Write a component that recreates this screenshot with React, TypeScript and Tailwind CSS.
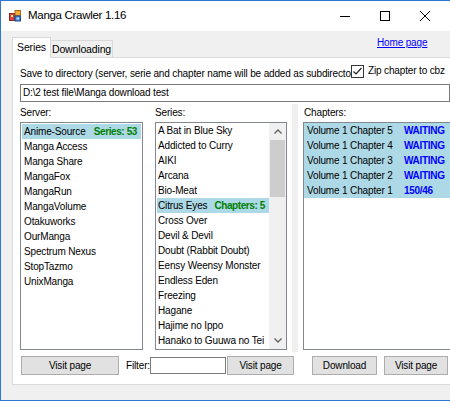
import React from "react";

const servers = [
  "Anime-Source",
  "Manga Access",
  "Manga Share",
  "MangaFox",
  "MangaRun",
  "MangaVolume",
  "Otakuworks",
  "OurManga",
  "Spectrum Nexus",
  "StopTazmo",
  "UnixManga",
];

const series = [
  "A Bat in Blue Sky",
  "Addicted to Curry",
  "AIKI",
  "Arcana",
  "Bio-Meat",
  "Citrus Eyes",
  "Cross Over",
  "Devil & Devil",
  "Doubt (Rabbit Doubt)",
  "Eensy Weensy Monster",
  "Endless Eden",
  "Freezing",
  "Hagane",
  "Hajime no Ippo",
  "Hanako to Guuwa no Tei",
];

const chapters = [
  ["Volume 1 Chapter 5", "WAITING"],
  ["Volume 1 Chapter 4", "WAITING"],
  ["Volume 1 Chapter 3", "WAITING"],
  ["Volume 1 Chapter 2", "WAITING"],
  ["Volume 1 Chapter 1", "150/46"],
];

function AppIcon() {
  return (
    <svg width="12" height="12" viewBox="0 0 12 12" className="shrink-0">
      <rect x="0.5" y="3.5" width="5" height="7" fill="#d9433b" stroke="#8a2a25" />
      <rect x="2" y="5" width="2" height="2" fill="#ffe9a8" />
      <rect x="6" y="0.5" width="5.5" height="5" fill="#f2a93a" stroke="#a86a18" />
      <rect x="6" y="6" width="5.5" height="5" fill="#3d7fd4" stroke="#1f4f94" />
      <rect x="7.5" y="7.5" width="2.5" height="2" fill="#bfe0ff" />
    </svg>
  );
}

function Btn({ label, w }: { label: string; w: string }) {
  return (
    <div
      className={`${w} h-[19px] shrink-0 bg-[#e1e1e1] border border-[#adadad] flex items-center justify-center text-[10px] leading-none`}
    >
      {label}
    </div>
  );
}

export default function App() {
  return (
    <div className="w-[450px] h-[401px] overflow-hidden bg-white font-['Liberation_Sans',Arial,sans-serif] text-[10px] tracking-[-0.15px] text-black">
      <div className="w-[461px] h-[401px] flex flex-col border-t border-l border-b border-[#2a78d2]">
        {/* Title bar */}
        <div className="h-[30px] shrink-0 bg-white flex items-center">
          <div className="ml-[8px] mt-[-1px]">
            <AppIcon />
          </div>
          <span className="ml-[7px] text-[11.5px] tracking-[-0.3px] leading-none mt-[-1px]">
            Manga Crawler 1.16
          </span>
          <div className="ml-auto mr-[16px] flex h-full">
            <div className="w-[40px] h-full flex items-center justify-center">
              <svg width="10" height="10" viewBox="0 0 10 10">
                <line x1="0" y1="5.5" x2="10" y2="5.5" stroke="#000" strokeWidth="1" />
              </svg>
            </div>
            <div className="w-[40px] h-full flex items-center justify-center">
              <svg width="10" height="10" viewBox="0 0 10 10">
                <rect x="0.5" y="0.5" width="9" height="9" fill="none" stroke="#000" strokeWidth="1" />
              </svg>
            </div>
            <div className="w-[40px] h-full flex items-center justify-center">
              <svg width="10" height="10" viewBox="0 0 10 10">
                <line x1="0" y1="0" x2="10" y2="10" stroke="#000" strokeWidth="1" />
                <line x1="10" y1="0" x2="0" y2="10" stroke="#000" strokeWidth="1" />
              </svg>
            </div>
          </div>
        </div>

        {/* Body */}
        <div className="flex-1 bg-[#f0f0f0] flex flex-col pl-[11px] pt-[6px]">
          {/* Tab strip */}
          <div className="h-[20px] flex items-end shrink-0">
            <div className="relative z-10 h-[21px] mb-[-1px] w-[39px] bg-white border border-b-0 border-[#d9d9d9] flex items-center justify-center text-[10.5px] leading-none pb-[2px]">
              Series
            </div>
            <div className="h-[17px] w-[62px] bg-[#f0f0f0] border border-l-0 border-b-0 border-[#d9d9d9] flex items-center justify-center text-[10.5px] leading-none">
              Downloading
            </div>
            <div className="ml-[264px] self-start mt-[0px] text-[10px] leading-[12px] text-[#0000ff] underline">
              Home page
            </div>
          </div>

          {/* Tab panel */}
          <div className="h-[328px] mr-[6px] bg-white border border-[#d9d9d9] flex flex-col pl-[7px] pr-[4px]">
            {/* label + checkbox */}
            <div className="mt-[6px] h-[16px] flex items-start">
              <div className="w-[331px] overflow-hidden whitespace-nowrap mt-[4px] leading-[12px]">
                Save to directory (server, serie and chapter name will be added as subdirectories):
              </div>
              <div className="flex items-start bg-white">
                <svg width="13" height="13" viewBox="0 0 13 13" className="mt-[1px] shrink-0">
                  <rect x="0.5" y="0.5" width="12" height="12" fill="#fff" stroke="#333" />
                  <path d="M2.5 6.5 L5 9 L10.5 3" fill="none" stroke="#222" strokeWidth="1.2" />
                </svg>
                <span className="ml-[4px] mt-[1px] leading-[12px] text-[10px] whitespace-nowrap">
                  Zip chapter to cbz
                </span>
              </div>
            </div>

            {/* directory input */}
            <div className="mt-[4px] h-[18px] border border-[#7a7a7a] flex items-center pl-[2px] leading-none shrink-0">
              D:\2 test file\Manga download test
            </div>

            {/* main split area */}
            <div className="mt-[2px] h-[248px] flex shrink-0">
              {/* Server column */}
              <div className="w-[123px] flex flex-col shrink-0">
                <div className="h-[18px] leading-[18px]">Server:</div>
                <div className="h-[228px] border border-[#828790] bg-white p-[1px] overflow-hidden">
                  {servers.map((s, i) => (
                    <div
                      key={s}
                      className={`h-[15px] flex items-center pl-[2px] pr-[4px] whitespace-nowrap ${
                        i === 0 ? "bg-[#add8e6]" : ""
                      }`}
                    >
                      <span>{s}</span>
                      {i === 0 && (
                        <span className="ml-auto font-bold text-[#008000] tracking-[-0.4px]">
                          Series: 53
                        </span>
                      )}
                    </div>
                  ))}
                </div>
              </div>

              {/* Series column */}
              <div className="ml-[12px] w-[132px] flex flex-col shrink-0">
                <div className="h-[18px] leading-[18px]">Series:</div>
                <div className="h-[228px] border border-[#828790] bg-white flex overflow-hidden">
                  <div className="flex-1 min-w-0 pt-[0px] pl-[1px] overflow-hidden">
                    {series.map((s, i) => (
                      <div
                        key={s}
                        className={`h-[15px] flex items-center pl-[1px] pr-[4px] whitespace-nowrap overflow-hidden ${
                          i === 5 ? "bg-[#add8e6]" : ""
                        }`}
                      >
                        <span>{s}</span>
                        {i === 5 && (
                          <span className="ml-auto font-bold text-[#008000] tracking-[-0.4px]">
                            Chapters: 5
                          </span>
                        )}
                      </div>
                    ))}
                  </div>
                  <div className="w-[17px] shrink-0 bg-[#f0f0f0] flex flex-col items-center">
                    <div className="h-[17px] flex items-center justify-center">
                      <svg width="8" height="5" viewBox="0 0 8 5">
                        <path d="M0.5 4.5 L4 1 L7.5 4.5" fill="none" stroke="#606060" strokeWidth="1.3" />
                      </svg>
                    </div>
                    <div className="w-[15px] h-[57px] bg-[#cdcdcd]" />
                    <div className="flex-1" />
                    <div className="h-[17px] flex items-center justify-center">
                      <svg width="8" height="5" viewBox="0 0 8 5">
                        <path d="M0.5 0.5 L4 4 L7.5 0.5" fill="none" stroke="#606060" strokeWidth="1.3" />
                      </svg>
                    </div>
                  </div>
                </div>
              </div>

              {/* Splitter */}
              <div className="ml-[5px] w-[6px] h-full bg-[#f0f0f0] shrink-0" />

              {/* Chapters column */}
              <div className="ml-[5px] flex-1 flex flex-col">
                <div className="h-[18px] leading-[18px] pl-[1px]">Chapters:</div>
                <div className="h-[228px] border border-r-0 border-[#828790] bg-white">
                  {chapters.map(([c, st]) => (
                    <div key={c} className="h-[15px] flex items-center bg-[#add8e6] pl-[3px] whitespace-nowrap">
                      <span className="w-[97px] shrink-0">{c}</span>
                      <span className="font-bold text-[#0000ff] tracking-[-0.3px]">{st}</span>
                    </div>
                  ))}
                </div>
              </div>
            </div>

            {/* bottom row */}
            <div className="mt-[4px] h-[19px] flex items-center shrink-0">
              <div className="ml-[1px]">
                <Btn label="Visit page" w="w-[98px]" />
              </div>
              <div className="ml-[7px] w-[24px] shrink-0">Filter:</div>
              <div className="w-[76px] h-[17px] border border-[#7a7a7a] bg-white shrink-0" />
              <div className="ml-[1px]">
                <Btn label="Visit page" w="w-[67px]" />
              </div>
              <div className="ml-[18px]">
                <Btn label="Download" w="w-[65px]" />
              </div>
              <div className="ml-[7px]">
                <Btn label="Visit page" w="w-[64px]" />
              </div>
            </div>
          </div>
        </div>
      </div>
    </div>
  );
}
